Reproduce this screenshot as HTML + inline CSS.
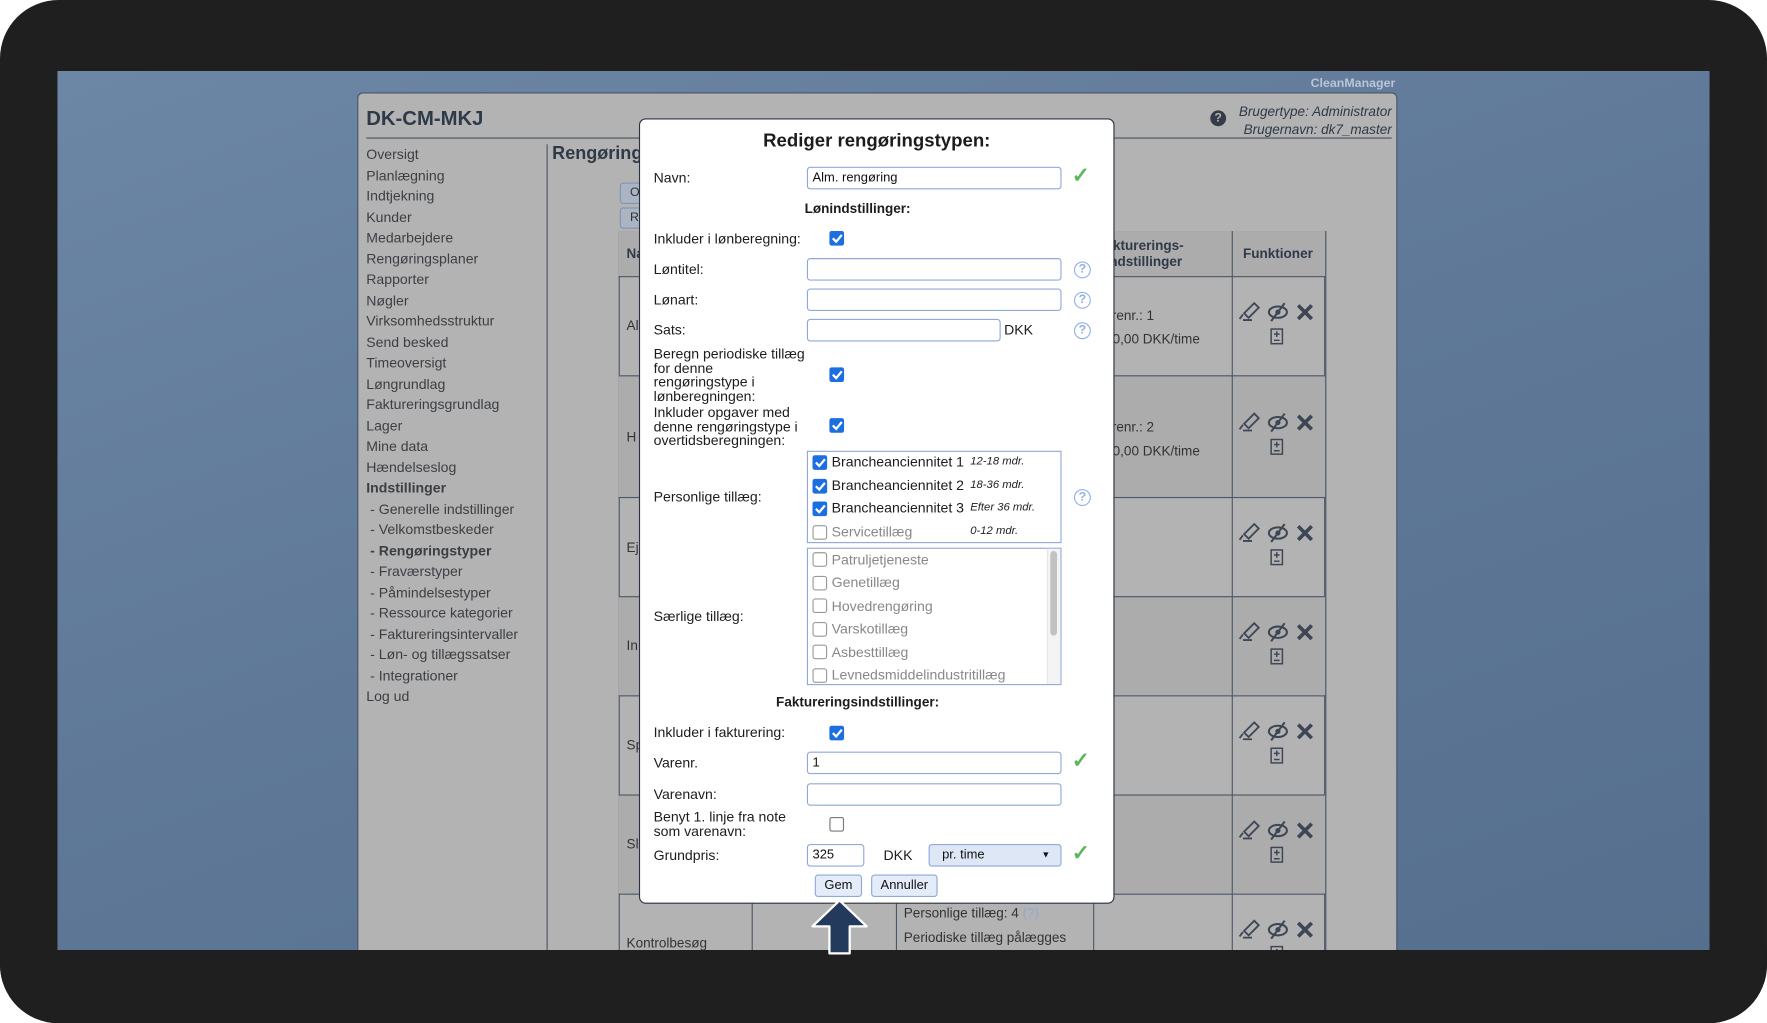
<!DOCTYPE html>
<html><head><meta charset="utf-8">
<style>
*{margin:0;padding:0;box-sizing:border-box}
html,body{width:1767px;height:1023px;overflow:hidden;background:#fff}
#s{position:absolute;left:0;top:0;width:1568px;height:908px;transform:scale(1.12691);transform-origin:0 0;font-family:"Liberation Sans",sans-serif;overflow:hidden}
.a{position:absolute;white-space:nowrap}
.frame{left:0;top:0;width:1568px;height:908px;background:#1f1f1f;border-radius:52px}
.scr{left:51px;top:63px;width:1466px;height:780px;background:linear-gradient(160deg,#6c86a6 0%,#5f7898 50%,#566f8e 100%);overflow:hidden}
.panel{left:317px;top:82px;width:923px;height:780px;background:#b3b3b3;border:1px solid #4a5566;border-radius:5px 5px 0 0}
.nav{font-size:12.5px;color:#3b3f44;left:325px}
.lbl{font-size:12.5px;color:#1c1c1c;left:580px}
.inp{left:716px;width:226px;height:20px;border:1px solid #8fa9d9;border-radius:3px;background:#fff;font-size:11.5px;padding:0 4px;line-height:18px;color:#111}
.cbu{width:13px;height:13px;border-radius:2px;border:1px solid #777;background:#fff}
.help{width:15px;height:15px;border:1.3px solid #8fb1e8;border-radius:50%;color:#8fb1e8;font-size:11px;text-align:center;line-height:13px;font-weight:bold}
.it{font-size:12.5px;color:#1c1c1c;left:738px}
.gr{color:#888}
.md{font-size:10px;font-style:italic;color:#222;left:861px}
.chk{color:#5cb85c;font-size:19px;font-weight:bold;left:951px}
</style></head><body>
<div id="s">
<div class="a frame"></div>
<div class="a scr"></div>
<div class="a" style="left:1163px;top:68px;font-size:11px;font-weight:bold;color:#b9c6d6">CleanManager</div>
<div class="a panel"></div>
<div class="a" style="left:325px;top:95px;font-size:18px;font-weight:bold;color:#2f3a48">DK-CM-MKJ</div>
<div class="a" style="left:325px;top:122px;width:910px;height:1px;background:#4a5566"></div>
<div class="a" style="left:1074px;top:98px;width:14px;height:14px;border-radius:50%;background:#333c48;color:#b3b3b3;font-size:11px;font-weight:bold;text-align:center;line-height:14px">?</div>
<div class="a" style="right:333px;top:92px;font-size:12px;font-style:italic;color:#2f3a48;text-align:right;line-height:15.5px">Brugertype: Administrator<br>Brugernavn: dk7_master</div>
<div class="a nav" style="top:128px;line-height:18.5px">Oversigt<br>Planlægning<br>Indtjekning<br>Kunder<br>Medarbejdere<br>Rengøringsplaner<br>Rapporter<br>Nøgler<br>Virksomhedsstruktur<br>Send besked<br>Timeoversigt<br>Løngrundlag<br>Faktureringsgrundlag<br>Lager<br>Mine data<br>Hændelseslog<br><b>Indstillinger</b><br>&nbsp;- Generelle indstillinger<br>&nbsp;- Velkomstbeskeder<br>&nbsp;<b>- Rengøringstyper</b><br>&nbsp;- Fraværstyper<br>&nbsp;- Påmindelsestyper<br>&nbsp;- Ressource kategorier<br>&nbsp;- Faktureringsintervaller<br>&nbsp;- Løn- og tillægssatser<br>&nbsp;- Integrationer<br>Log ud</div>
<div class="a" style="left:485px;top:128px;width:1px;height:720px;background:#4a5566"></div>
<div class="a" style="left:490px;top:128px;font-size:16px;font-weight:bold;color:#2f3a48">Rengøringstyper</div>
<div class="a" style="left:550px;top:162px;width:30px;height:19px;border:1px solid #7f95b5;border-radius:3px;background:#aab4c2;font-size:11px;padding:2px 8px;color:#333">O</div>
<div class="a" style="left:550px;top:184px;width:30px;height:19px;border:1px solid #7f95b5;border-radius:3px;background:#aab4c2;font-size:11px;padding:2px 8px;color:#333">R</div>
<div class="a" style="left:549px;top:205px;width:627px;height:660px;border:1px solid #4c5868;background:#b3b3b3"></div>
<div class="a" style="left:549px;top:333px;width:627px;height:108px;background:#acacac"></div>
<div class="a" style="left:549px;top:529px;width:627px;height:88px;background:#acacac"></div>
<div class="a" style="left:549px;top:705px;width:627px;height:88px;background:#acacac"></div>
<div class="a" style="left:549px;top:205px;width:627px;height:40px;background:#acacac"></div>
<div class="a" style="left:667px;top:205px;width:1px;height:660px;background:#4c5868"></div>
<div class="a" style="left:795px;top:205px;width:1px;height:660px;background:#4c5868"></div>
<div class="a" style="left:970px;top:205px;width:1px;height:660px;background:#4c5868"></div>
<div class="a" style="left:1093px;top:205px;width:1px;height:660px;background:#4c5868"></div>
<div class="a" style="left:1176px;top:205px;width:1px;height:660px;background:#4c5868"></div>
<div class="a" style="left:549px;top:245px;width:627px;height:1px;background:#4c5868"></div>
<div class="a" style="left:549px;top:333px;width:627px;height:1px;background:#4c5868"></div>
<div class="a" style="left:549px;top:441px;width:627px;height:1px;background:#4c5868"></div>
<div class="a" style="left:549px;top:529px;width:627px;height:1px;background:#4c5868"></div>
<div class="a" style="left:549px;top:617px;width:627px;height:1px;background:#4c5868"></div>
<div class="a" style="left:549px;top:705px;width:627px;height:1px;background:#4c5868"></div>
<div class="a" style="left:549px;top:793px;width:627px;height:1px;background:#4c5868"></div>
<div class="a" style="left:556px;top:218px;font-size:12px;font-weight:bold;color:#2f3a48">Na</div>
<div class="a" style="left:981px;top:211px;font-size:12px;font-weight:bold;color:#2f3a48;line-height:14px">akturerings-<br>indstillinger</div>
<div class="a" style="left:1103px;top:218px;font-size:12px;font-weight:bold;color:#2f3a48">Funktioner</div>
<div class="a" style="left:556px;top:282px;font-size:12px;color:#333">Al</div>
<div class="a" style="left:556px;top:381px;font-size:12px;color:#333">H</div>
<div class="a" style="left:556px;top:479px;font-size:12px;color:#333">Ej</div>
<div class="a" style="left:556px;top:566px;font-size:12px;color:#333">In</div>
<div class="a" style="left:556px;top:654px;font-size:12px;color:#333">Sp</div>
<div class="a" style="left:556px;top:742px;font-size:12px;color:#333">Sl</div>
<div class="a" style="left:556px;top:830px;font-size:12px;color:#333">Kontrolbesøg</div>
<div class="a" style="left:974px;top:270px;font-size:12px;color:#333;line-height:21px">varenr.: 1<br>320,00 DKK/time</div>
<div class="a" style="left:974px;top:369px;font-size:12px;color:#333;line-height:21px">varenr.: 2<br>320,00 DKK/time</div>
<div class="a" style="left:802px;top:799px;font-size:12px;color:#333;line-height:22px">Personlige tillæg: 4 <span style="color:#8fa9d0">(?)</span><br>Periodiske tillæg pålægges</div>
<div class="a" style="left:567px;top:105px;width:422px;height:697px;background:#fff;border:1px solid #2a3140;border-radius:6px"></div>
<div class="a" style="left:567px;top:116px;width:422px;text-align:center;font-size:16.5px;font-weight:bold;color:#1c1c1c">Rediger rengøringstypen:</div>
<div class="a lbl" style="top:151px">Navn:</div>
<div class="a inp" style="top:148px">Alm. rengøring</div>
<div class="a chk" style="top:145px">✓</div>
<div class="a" style="left:567px;top:178px;width:388px;text-align:center;font-size:12px;font-weight:bold;color:#1c1c1c">Lønindstillinger:</div>
<div class="a lbl" style="top:205px">Inkluder i lønberegning:</div>
<div class="a lbl" style="top:232px">Løntitel:</div>
<div class="a inp" style="top:229px"></div>
<div class="a lbl" style="top:259px">Lønart:</div>
<div class="a inp" style="top:256px"></div>
<div class="a lbl" style="top:286px">Sats:</div>
<div class="a inp" style="top:283px;width:172px"></div>
<div class="a" style="left:891px;top:286px;font-size:12.5px;color:#1c1c1c">DKK</div>
<div class="a help" style="left:953px;top:232px">?</div>
<div class="a help" style="left:953px;top:259px">?</div>
<div class="a help" style="left:953px;top:286px">?</div>
<div class="a lbl" style="top:308px;line-height:12.6px">Beregn periodiske tillæg<br>for denne<br>rengøringstype i<br>lønberegningen:</div>
<div class="a lbl" style="top:360px;line-height:12.6px">Inkluder opgaver med<br>denne rengøringstype i<br>overtidsberegningen:</div>
<div class="a lbl" style="top:434px">Personlige tillæg:</div>
<div class="a help" style="left:953px;top:434px">?</div>
<div class="a" style="left:716px;top:400px;width:226px;height:82px;border:1px solid #8fa9d9"></div>
<div class="a it" style="top:403px">Brancheanciennitet 1</div>
<div class="a it" style="top:424px">Brancheanciennitet 2</div>
<div class="a it" style="top:444px">Brancheanciennitet 3</div>
<div class="a it gr" style="top:465px">Servicetillæg</div>
<div class="a md" style="top:404px">12-18 mdr.</div>
<div class="a md" style="top:425px">18-36 mdr.</div>
<div class="a md" style="top:445px">Efter 36 mdr.</div>
<div class="a md gr" style="top:466px">0-12 mdr.</div>
<div class="a lbl" style="top:540px">Særlige tillæg:</div>
<div class="a" style="left:716px;top:486px;width:226px;height:122px;border:1px solid #8fa9d9;overflow:hidden"></div>
<div class="a" style="left:929px;top:487px;width:12px;height:120px;background:#f4f4f4;border-left:1px solid #e6e6e6"></div>
<div class="a" style="left:932px;top:489px;width:6px;height:75px;background:#c2c2c2;border-radius:3px"></div>
<div class="a it gr" style="top:490px">Patruljetjeneste</div>
<div class="a it gr" style="top:510px">Genetillæg</div>
<div class="a it gr" style="top:531px">Hovedrengøring</div>
<div class="a it gr" style="top:551px">Varskotillæg</div>
<div class="a it gr" style="top:572px">Asbesttillæg</div>
<div class="a it gr" style="top:592px">Levnedsmiddelindustritillæg</div>
<div class="a" style="left:567px;top:616px;width:388px;text-align:center;font-size:12px;font-weight:bold;color:#1c1c1c">Faktureringsindstillinger:</div>
<div class="a lbl" style="top:643px">Inkluder i fakturering:</div>
<div class="a lbl" style="top:670px">Varenr.</div>
<div class="a inp" style="top:667px">1</div>
<div class="a chk" style="top:664px">✓</div>
<div class="a lbl" style="top:698px">Varenavn:</div>
<div class="a inp" style="top:695px"></div>
<div class="a lbl" style="top:719px;line-height:12.6px">Benyt 1. linje fra note<br>som varenavn:</div>
<div class="a cbu" style="left:736px;top:725px"></div>
<div class="a lbl" style="top:752px">Grundpris:</div>
<div class="a inp" style="top:749px;width:51px">325</div>
<div class="a" style="left:784px;top:752px;font-size:12.5px;color:#1c1c1c">DKK</div>
<div class="a" style="left:824px;top:749px;width:118px;height:20px;border:1px solid #8fa9d9;border-radius:3px;background:#dde7f6;font-size:11.5px;padding:0 11px;line-height:18px;color:#111">pr. time<span style="position:absolute;right:9px;top:0;font-size:8px">▼</span></div>
<div class="a chk" style="top:746px">✓</div>
<div class="a" style="left:723px;top:776px;width:42px;height:20px;border:1px solid #8fa9d9;border-radius:3px;background:#e3ecf8;font-size:11.5px;text-align:center;line-height:18px;color:#111">Gem</div>
<div class="a" style="left:773px;top:776px;width:59px;height:20px;border:1px solid #8fa9d9;border-radius:3px;background:#e3ecf8;font-size:11.5px;text-align:center;line-height:18px;color:#111">Annuller</div>
<div class="a" style="left:0;top:843px;width:1568px;height:65px;background:#1f1f1f;border-radius:0 0 52px 52px"></div>
<svg class="a" style="left:0;top:0" width="1568" height="908">
<g fill="#1b6fe0">
<rect x="736" y="205" width="13" height="13" rx="2"/><rect x="736" y="326" width="13" height="13" rx="2"/><rect x="736" y="371" width="13" height="13" rx="2"/><rect x="736" y="644" width="13" height="13" rx="2"/>
<rect x="721" y="404" width="13" height="13" rx="2"/><rect x="721" y="425" width="13" height="13" rx="2"/><rect x="721" y="445" width="13" height="13" rx="2"/>
</g>
<g fill="none" stroke="#fff" stroke-width="2">
<path d="M739 211.5l3 3 5-6"/><path d="M739 332.5l3 3 5-6"/><path d="M739 377.5l3 3 5-6"/><path d="M739 650.5l3 3 5-6"/>
<path d="M724 410.5l3 3 5-6"/><path d="M724 431.5l3 3 5-6"/><path d="M724 451.5l3 3 5-6"/>
</g>
<g fill="#fff" stroke="#999" stroke-width="1">
<rect x="721.5" y="466.5" width="12" height="12" rx="2"/><rect x="721.5" y="490.5" width="12" height="12" rx="2"/><rect x="721.5" y="511.5" width="12" height="12" rx="2"/><rect x="721.5" y="531.5" width="12" height="12" rx="2"/><rect x="721.5" y="552.5" width="12" height="12" rx="2"/><rect x="721.5" y="572.5" width="12" height="12" rx="2"/><rect x="721.5" y="593.5" width="12" height="12" rx="2"/>
</g>
<path d="M745 799 L769 822 L754 822 L754 846 L736 846 L736 822 L721 822 Z" fill="#233a5c" stroke="#fff" stroke-width="2" stroke-linejoin="round"/>
</svg>
<svg class="a" style="left:1093px;top:245px" width="84" height="598">
<defs><g id="ic">
<path d="M11 11 L20 2 L24 6 L15 15 Z M10 17 L18 17" fill="none" stroke="#3c4654" stroke-width="1.6"/>
<path d="M7 16 L10 12" stroke="#3c4654" stroke-width="1.6"/>
<ellipse cx="41" cy="10" rx="8" ry="5" fill="none" stroke="#3c4654" stroke-width="1.8"/>
<circle cx="41" cy="10" r="2.3" fill="#3c4654"/>
<path d="M35 18 L47 2" stroke="#3c4654" stroke-width="1.8"/>
<path d="M59 4 L71 16 M71 4 L59 16" stroke="#3c4654" stroke-width="3.2"/>
<rect x="35" y="25" width="10" height="13" fill="none" stroke="#3c4654" stroke-width="1.3"/>
<path d="M40 27 v5 M37.5 29.5 h5 M37.5 35 h5" stroke="#3c4654" stroke-width="1.3"/>
</g></defs>
<use href="#ic" x="0" y="22"/><use href="#ic" x="0" y="120"/><use href="#ic" x="0" y="218"/><use href="#ic" x="0" y="306"/><use href="#ic" x="0" y="394"/><use href="#ic" x="0" y="482"/><use href="#ic" x="0" y="570"/>
</svg>
</div>
</body></html>
